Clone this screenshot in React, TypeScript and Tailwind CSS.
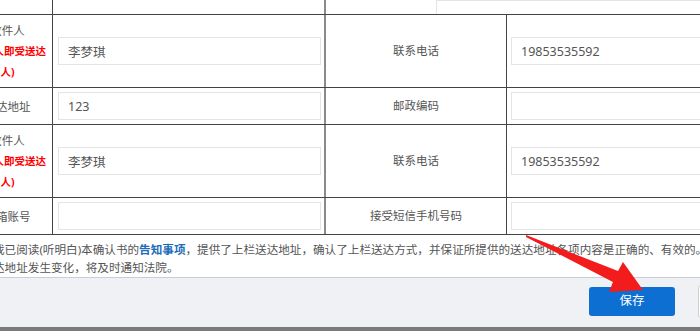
import React from "react";

const font = "font-['Noto_Sans','Noto_Sans_CJK_SC',sans-serif]";

const Field = ({ value = "" }: { value?: string }) => (
  <input
    readOnly
    value={value}
    className="h-[28px] w-full border border-[#e4e4e4] bg-white px-[9px] text-[12.5px] text-[#555] outline-none"
  />
);

const App: React.FC = () => {
  const who = (
    <>
      <div>收件人</div>
      <div className="whitespace-nowrap text-[10.5px] font-bold text-[#ff0000]">(收件人即受送达</div>
      <div className="text-[10.5px] font-bold text-[#ff0000]">人)</div>
    </>
  );

  const rows = [
    { left: who, name: "李梦琪", right: "联系电话", phone: "19853535592", tall: true },
    { left: <div>送达地址</div>, name: "123", right: "邮政编码", phone: "", tall: false },
    { left: who, name: "李梦琪", right: "联系电话", phone: "19853535592", tall: true },
    { left: <div>邮箱账号</div>, name: "", right: "接受短信手机号码", phone: "", tall: false },
  ];

  return (
    <div className={`relative h-[331px] w-[700px] overflow-hidden bg-white ${font}`}>
      <div className="ml-[-37px] flex w-[837px] flex-col">
        {/* cut-off row above */}
        <div className="grid h-[15px] grid-cols-[90px_273px_1fr] overflow-hidden border-b border-[#444]">
          <div className="border-r border-[#444]" />
          <div className="border-r-2 border-[#8a8a8a]" />
          <div className="flex items-end pb-[4px] pl-[110px]">
            <Field />
          </div>
        </div>

        {rows.map((r, i) => (
          <div
            key={i}
            className={`grid grid-cols-[90px_273px_181px_1fr] border-b border-[#444] ${
              r.tall ? "h-[73px]" : "h-[37px]"
            }`}
          >
            <div className="flex flex-col items-center justify-center border-r border-[#444] text-center text-[11.5px] leading-[21px] text-[#555]">
              {r.left}
            </div>
            <div className="flex items-center border-r-2 border-[#8a8a8a] pl-[5px] pr-[3px]">
              <Field value={r.name} />
            </div>
            <div className="flex items-center justify-center border-r border-[#444] text-[11.5px] text-[#555]">
              {r.right}
            </div>
            <div className="flex items-center pl-[4px]">
              <Field value={r.phone} />
            </div>
          </div>
        ))}

        <p className="h-[42px] whitespace-nowrap pl-[30px] pt-[6px] text-[11.6px] leading-[18px] text-[#555]">
          我已阅读(听明白)本确认书的<span className="font-bold text-[#1e6cb8]">告知事项</span>
          ，提供了上栏送达地址，确认了上栏送达方式，并保证所提供的送达地址各项内容是正确的、有效的。如送
          <br />
          达地址发生变化，将及时通知法院。
        </p>

        <div className="flex h-[50px] items-start justify-end gap-[23px] border-t border-[#c6cddb] bg-[#eff1f4] pr-[16px] pt-[9px]">
          <button className="h-[29px] w-[86px] rounded-[3px] bg-[#0c6fd1] text-[12.5px] text-white">
            保存
          </button>
          <button className="-mt-[2px] h-[33px] w-[86px] rounded-[3px] border border-[#cfcfcf] bg-white text-[12.5px] text-[#333]">
            取消
          </button>
        </div>
        <div className="h-[4px] bg-[#7b7b7b]" />
      </div>

      <svg className="pointer-events-none absolute left-0 top-0" width="700" height="331">
        <polygon
          points="526,235 618,271 623,262 643,290 609,292 613,282 526,237"
          fill="#f21c1c"
        />
      </svg>
    </div>
  );
};

export default App;
